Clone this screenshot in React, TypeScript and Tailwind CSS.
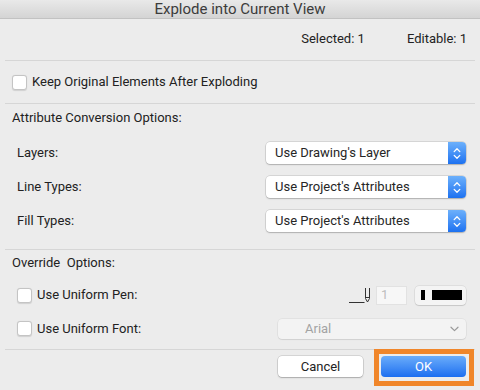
import React from "react";

function Checkbox() {
  return (
    <div className="w-[15px] h-[15px] rounded-[3px] bg-white border border-[#c4c4c4] shadow-[0_0.5px_1px_rgba(0,0,0,0.12)] shrink-0" />
  );
}

function Stepper() {
  return (
    <div className="w-[18px] h-full rounded-r-[4px] bg-gradient-to-b from-[#6cb0fb] to-[#1c71f0] flex items-center justify-center">
      <svg width="8" height="13" viewBox="0 0 8 13" fill="none" stroke="white" strokeWidth="1.3" strokeLinecap="round" strokeLinejoin="round">
        <path d="M1.2 4.6 L4 1.8 L6.8 4.6" />
        <path d="M1.2 8.4 L4 11.2 L6.8 8.4" />
      </svg>
    </div>
  );
}

function Select({ value }: { value: string }) {
  return (
    <div className="ml-auto mr-[14px] w-[200px] h-[22px] flex items-stretch rounded-[4px] bg-white shadow-[0_0_0_0.5px_rgba(0,0,0,0.18),0_1px_1.5px_rgba(0,0,0,0.18)]">
      <div className="flex-1 flex items-center pl-[9px] text-[13px] text-[#262626]">{value}</div>
      <Stepper />
    </div>
  );
}

function Sep() {
  return <div className="h-px mx-[5px] bg-[#d6d6d6]" />;
}

export default function App() {
  return (
    <div
      className="w-[480px] h-[390px] bg-[#ececec] text-[#222] text-[13px] flex flex-col overflow-hidden"
      style={{ fontFamily: "Roboto, 'Liberation Sans', sans-serif" }}
    >
      {/* title bar */}
      <div className="h-[19px] shrink-0 bg-gradient-to-b from-[#e9e9e9] to-[#d4d4d4] border-b border-[#c2c2c2] flex items-center justify-center text-[15px] text-[#3c3c3c]">
        Explode into Current View
      </div>

      {/* info row */}
      <div className="h-[41px] shrink-0 flex items-center justify-end gap-[42px] pr-[13px] pb-[2px]">
        <span>Selected: 1</span>
        <span>Editable: 1</span>
      </div>
      <Sep />

      {/* keep original */}
      <div className="h-[42px] shrink-0 flex items-center pl-[12px] gap-[5px]">
        <Checkbox />
        <span>Keep Original Elements After Exploding</span>
      </div>
      <Sep />

      {/* attribute conversion */}
      <div className="h-[28px] shrink-0 flex items-center pl-[12px]">Attribute Conversion Options:</div>
      <div className="mt-[4px] flex flex-col">
        <div className="h-[34px] flex items-center pl-[17px]">
          <span>Layers:</span>
          <Select value="Use Drawing's Layer" />
        </div>
        <div className="h-[34px] flex items-center pl-[17px]">
          <span>Line Types:</span>
          <Select value="Use Project's Attributes" />
        </div>
        <div className="h-[34px] flex items-center pl-[17px]">
          <span>Fill Types:</span>
          <Select value="Use Project's Attributes" />
        </div>
      </div>
      <div className="h-[11px] shrink-0" />
      <Sep />

      {/* override */}
      <div className="h-[26px] shrink-0 flex items-center pl-[12px] whitespace-pre">Override  Options:</div>
      <div className="mt-[2px] h-[34px] shrink-0 flex items-center pl-[17px]">
        <Checkbox />
        <span className="ml-[5px]">Use Uniform Pen:</span>
        <div className="ml-auto mr-[14px] flex items-center">
          <svg width="24" height="20" viewBox="0 0 24 20" fill="none" stroke="#333" strokeWidth="1">
            <path d="M0 17.5 H15.5" />
            <path d="M16.5 3 V13.5 L18.5 17 L20.5 13.5 V3" />
            <path d="M16.5 12.5 H20.5" />
          </svg>
          <div className="ml-[3px] w-[31px] h-[19px] bg-[#f7f7f7] border border-[#e2e2e2] flex items-center pl-[4px] text-[#bdbdbd]">1</div>
          <div className="ml-[8px] w-[51px] h-[19px] rounded-[4px] bg-[#f4f4f4] shadow-[0_0_0_0.5px_rgba(0,0,0,0.12),0_1px_1px_rgba(0,0,0,0.1)] flex items-center pl-[6px] gap-[7px]">
            <div className="w-[4px] h-[10px] bg-black" />
            <div className="w-[30px] h-[10px] bg-black" />
          </div>
        </div>
      </div>
      <div className="h-[33px] shrink-0 flex items-center pl-[17px]">
        <Checkbox />
        <span className="ml-[5px]">Use Uniform Font:</span>
        <div className="ml-auto mr-[14px] w-[188px] h-[20px] rounded-[4px] bg-[#f3f3f3] shadow-[0_0_0_0.5px_rgba(0,0,0,0.08),0_1px_1px_rgba(0,0,0,0.08)] flex items-center pl-[27px] pr-[7px] text-[#a3a3a3]">
          <span className="flex-1">Arial</span>
          <svg width="9" height="6" viewBox="0 0 9 6" fill="none" stroke="#9a9a9a" strokeWidth="1.2" strokeLinecap="round" strokeLinejoin="round">
            <path d="M1 1.2 L4.5 4.6 L8 1.2" />
          </svg>
        </div>
      </div>
      <div className="h-[4px] shrink-0" />
      <Sep />

      {/* footer */}
      <div className="-mt-px flex items-start justify-end pr-[6px]">
        <div className="mt-[7px] w-[85px] h-[21px] rounded-[4px] bg-white shadow-[0_0_0_0.5px_rgba(0,0,0,0.2),0_1px_1.5px_rgba(0,0,0,0.2)] flex items-center justify-center">
          Cancel
        </div>
        <div className="ml-[11px] w-[100px] h-[37px] border-[5px] border-[#f0862a] pt-[2px] pl-[2px] pr-[3px] pb-[4px] bg-[#ececec]">
          <div className="w-full h-full rounded-[4px] bg-gradient-to-b from-[#6aacfa] to-[#1b6ef0] flex items-center justify-center text-white">
            OK
          </div>
        </div>
      </div>
    </div>
  );
}
